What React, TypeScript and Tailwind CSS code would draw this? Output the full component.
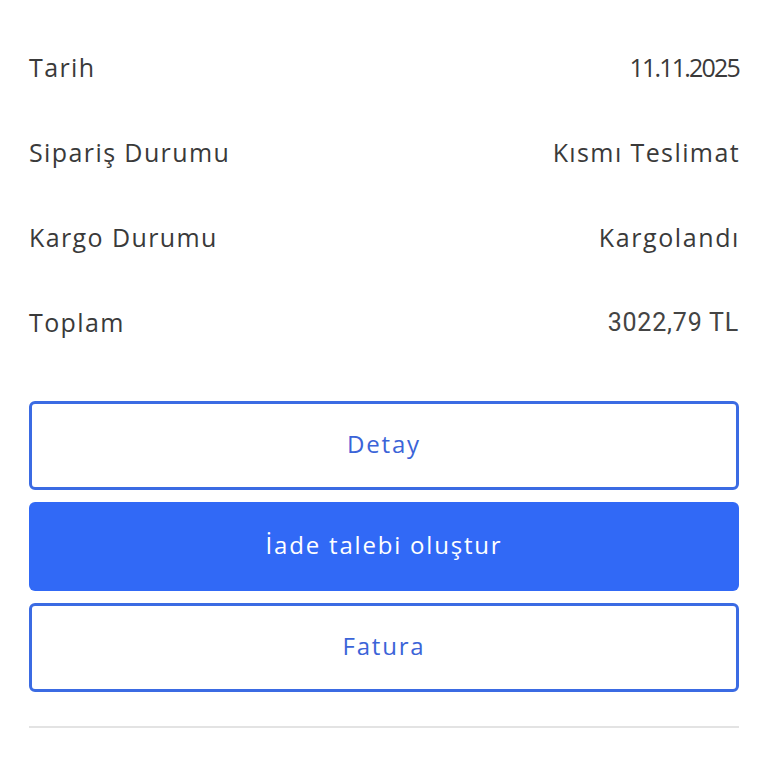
const rows = [
  { label: "Tarih", value: "11.11.2025", valueClass: "tracking-[-1.8px]" },
  { label: "Sipariş Durumu", value: "Kısmı Teslimat", valueClass: "tracking-[1.4px] -mr-[1px]" },
  { label: "Kargo Durumu", value: "Kargolandı", valueClass: "tracking-[1.6px] -mr-[1px]" },
  { label: "Toplam", value: "3022,79 TL", valueClass: "font-['Roboto'] tracking-[0.8px] text-[#444444]" },
];

export default function App() {
  return (
    <div
      className="min-h-[768px] bg-white px-[29px] pt-[25px]"
      style={{ fontFamily: '"Open Sans", "Noto Sans", sans-serif' }}
    >
      {rows.map((r) => (
        <div key={r.label} className="flex h-[85px] items-center justify-between text-[25px] text-[#3a3a3a]">
          <span className="tracking-[1.4px]">{r.label}</span>
          <span className={r.valueClass}>{r.value}</span>
        </div>
      ))}

      <div className="mt-[36px] flex flex-col gap-[12px]">
        <button className="h-[89px] w-full rounded-[6px] border-[3px] border-[#3b6be3] bg-white pb-[3px] text-[24px] tracking-[1.8px] text-[#3b64d8]">
          Detay
        </button>
        <button className="h-[89px] w-full rounded-[6px] bg-[#3169f6] pb-[3px] text-[24px] tracking-[1.8px] text-white">
          İade talebi oluştur
        </button>
        <button className="h-[89px] w-full rounded-[6px] border-[3px] border-[#3b6be3] bg-white pb-[3px] text-[24px] tracking-[1.8px] text-[#3b64d8]">
          Fatura
        </button>
      </div>

      <div className="mt-[34px] h-[2px] bg-[#e3e3e3]" />
    </div>
  );
}
